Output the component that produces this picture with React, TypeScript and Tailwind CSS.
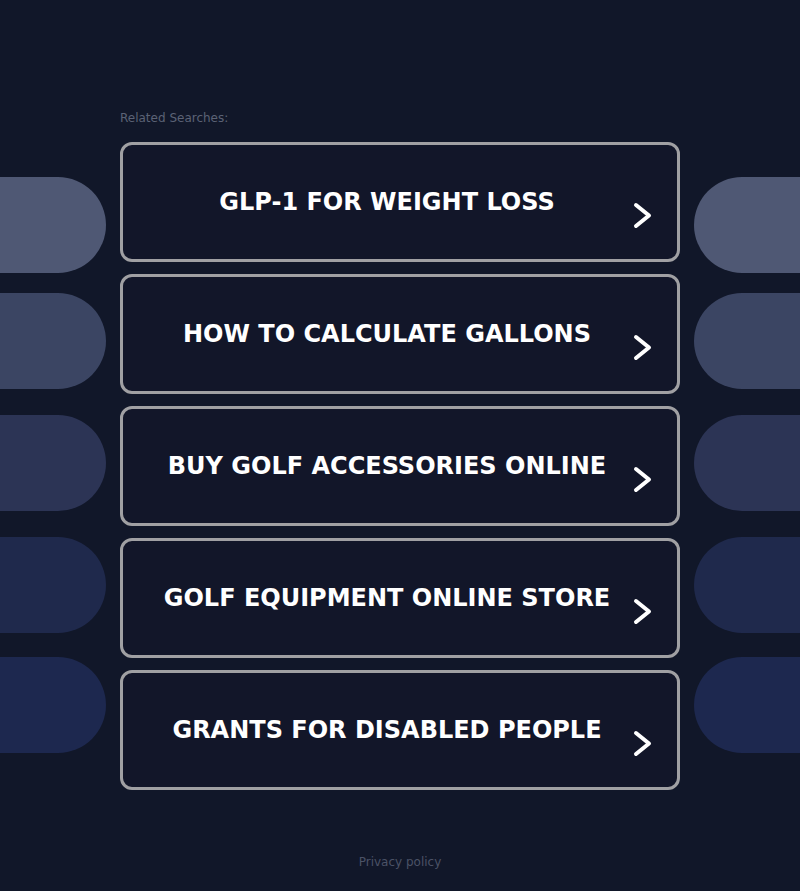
import React from "react";

const searches = [
  "GLP-1 FOR WEIGHT LOSS",
  "HOW TO CALCULATE GALLONS",
  "BUY GOLF ACCESSORIES ONLINE",
  "GOLF EQUIPMENT ONLINE STORE",
  "GRANTS FOR DISABLED PEOPLE",
];

// Decorative side pills, top margin and colour per row
const pills = [
  { mt: "mt-0", bg: "bg-[#4f5874]" },
  { mt: "mt-[20px]", bg: "bg-[#3b4563]" },
  { mt: "mt-[26px]", bg: "bg-[#2c3455]" },
  { mt: "mt-[26px]", bg: "bg-[#1f294c]" },
  { mt: "mt-[24px]", bg: "bg-[#1d284f]" },
];

function Chevron() {
  return (
    <svg width="22" height="29" viewBox="0 0 22 29" fill="none" className="block">
      <path
        d="M4 4 L17 14.5 L4 25"
        stroke="#ffffff"
        strokeWidth="4"
        strokeLinecap="round"
        strokeLinejoin="round"
      />
    </svg>
  );
}

export default function App() {
  return (
    <div
      className="min-h-[891px] w-full bg-[#111729] flex flex-col"
      style={{ fontFamily: '"DejaVu Sans", "Liberation Sans", sans-serif' }}
    >
      <div className="flex pt-[110px]">
        <div className="w-[106px] shrink-0 flex flex-col pt-[67px]">
          {pills.map((p, i) => (
            <div key={i} className={`${p.mt} h-[96px] w-[106px] rounded-r-[48px] ${p.bg}`} />
          ))}
        </div>

        <div className="w-[560px] shrink-0 mx-[14px] flex flex-col">
          <div className="h-[16px] text-[12px] leading-[16px] text-[#5b6275]">Related Searches:</div>
          <div className="mt-[16px] flex flex-col gap-[12px]">
            {searches.map((s) => (
              <a
                key={s}
                href="#"
                className="h-[120px] rounded-[12px] border-[3px] border-[#a0a0a3] bg-[#121629] flex items-center relative"
              >
                <span className="flex-1 text-center pr-[26px] text-white font-bold text-[24px] tracking-normal leading-none">
                  {s}
                </span>
                <span className="absolute right-[23px] top-[56px]">
                  <Chevron />
                </span>
              </a>
            ))}
          </div>
        </div>

        <div className="w-[106px] shrink-0 flex flex-col pt-[67px]">
          {pills.map((p, i) => (
            <div key={i} className={`${p.mt} h-[96px] w-[106px] rounded-l-[48px] ${p.bg}`} />
          ))}
        </div>
      </div>

      <div className="mt-[64px] text-center text-[12px] leading-[16px] text-[#4b5266]">Privacy policy</div>
    </div>
  );
}
